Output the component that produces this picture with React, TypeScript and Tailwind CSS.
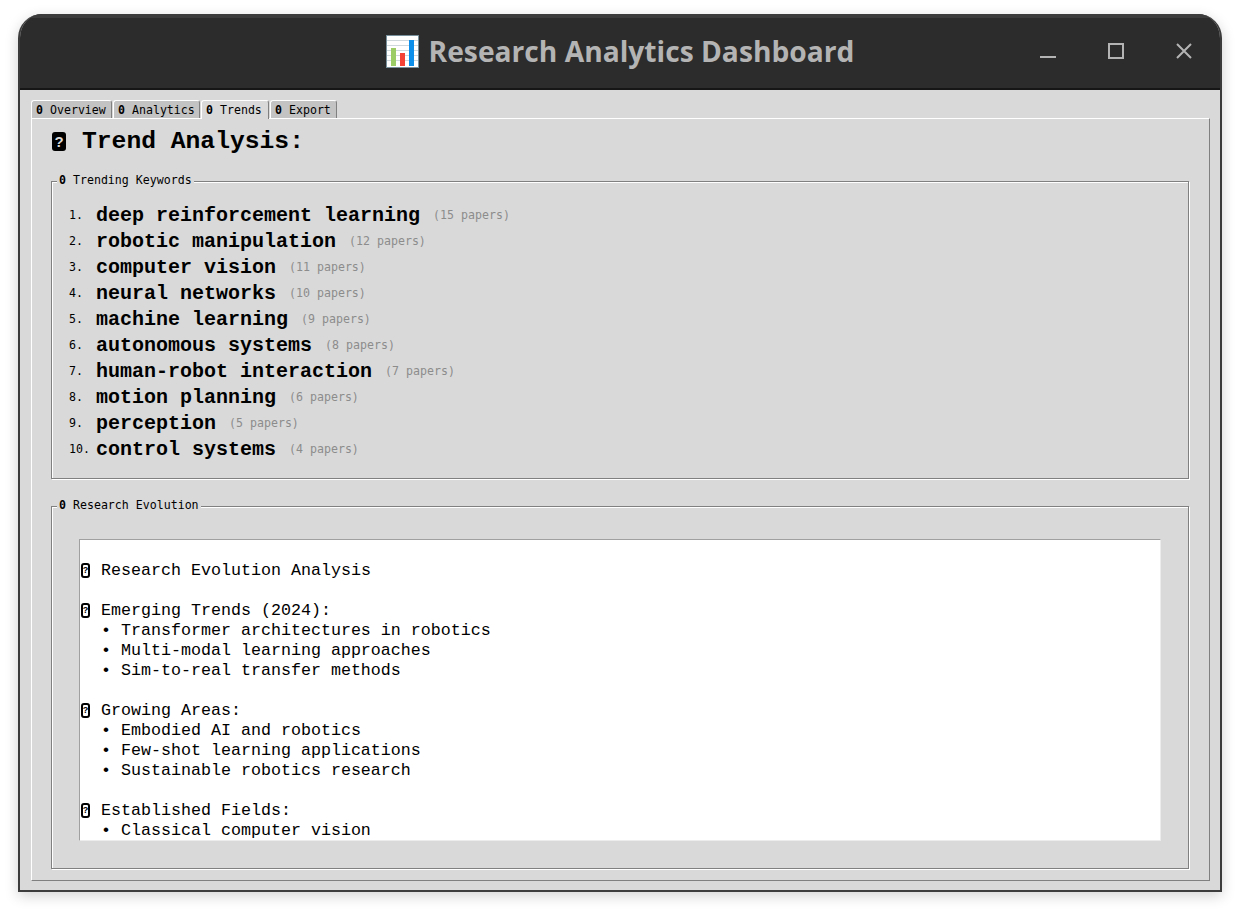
import React from 'react';

const keywords = [
  ['deep reinforcement learning', 15],
  ['robotic manipulation', 12],
  ['computer vision', 11],
  ['neural networks', 10],
  ['machine learning', 9],
  ['autonomous systems', 8],
  ['human-robot interaction', 7],
  ['motion planning', 6],
  ['perception', 5],
  ['control systems', 4],
] as const;

const tabs = [
  { name: 'Overview', width: 'w-[81px]', active: false },
  { name: 'Analytics', width: 'w-[87px]', active: false },
  { name: 'Trends', width: 'w-[68px]', active: true },
  { name: 'Export', width: 'w-[67px]', active: false },
];

const evolution: (string | { head: string })[] = [
  '',
  { head: 'Research Evolution Analysis' },
  '',
  { head: 'Emerging Trends (2024):' },
  '  • Transformer architectures in robotics',
  '  • Multi-modal learning approaches',
  '  • Sim-to-real transfer methods',
  '',
  { head: 'Growing Areas:' },
  '  • Embodied AI and robotics',
  '  • Few-shot learning applications',
  '  • Sustainable robotics research',
  '',
  { head: 'Established Fields:' },
  '  • Classical computer vision',
];

// missing-glyph box that the toolkit draws in place of the emoji
const Tofu: React.FC = () => (
  <span className="inline-flex h-[15px] w-[9px] items-center justify-center rounded-[3px] border-2 border-black bg-white font-['Liberation_Sans',sans-serif] text-[9px] font-bold leading-none text-black">
    ?
  </span>
);

const SmallTofu: React.FC = () => <span className="font-bold">0</span>;

const ChartIcon: React.FC = () => (
  <svg width="33" height="33" viewBox="0 0 33 33" className="shrink-0">
    <rect x="0.5" y="0.5" width="32" height="32" fill="#fff" stroke="#78909c" />
    <path d="M1 5.5h31M1 10.5h31M1 15.5h31M1 20.5h31M1 25.5h31" stroke="#cfd8dc" strokeWidth="1" />
    <rect x="5" y="13" width="5" height="18" fill="#9ccc65" />
    <rect x="14" y="18" width="5" height="13" fill="#f44336" />
    <rect x="23" y="5" width="5" height="26" fill="#0b8fea" />
  </svg>
);

const App: React.FC = () => {
  return (
    <div className="h-[910px] w-[1240px] bg-white pl-[18px] pt-[14px] font-['Liberation_Mono',monospace] text-black">
      <div className="flex h-[878px] w-[1204px] flex-col overflow-hidden rounded-t-[24px] border-2 border-t-0 border-[#3c3c3c] bg-[#d9d9d9] shadow-[0_4px_14px_rgba(0,0,0,0.18)]">
        <header className="grid h-[76px] shrink-0 grid-cols-[1fr_auto_1fr] items-center border-t-[4px] border-b-2 border-t-[#3c3c3c] border-b-[#161616] bg-[#2c2c2c] pb-[4px]">
          <div />
          <div className="flex items-center gap-[10px]">
            <ChartIcon />
            <span className="font-['Open_Sans',sans-serif] text-[28.2px] font-bold leading-none text-[#b4b4b4]">
              Research Analytics Dashboard
            </span>
          </div>
          <div className="flex items-center justify-end pr-[28px]">
            <div className="mr-[52px] mt-[12px] h-[2px] w-[16px] bg-[#b4b4b4]" />
            <div className="mr-[52px] h-[16px] w-[16px] border-2 border-[#b4b4b4]" />
            <svg width="16" height="16" viewBox="0 0 16 16" className="text-[#b4b4b4]">
              <path d="M1 1l14 14M15 1L1 15" stroke="currentColor" strokeWidth="2" />
            </svg>
          </div>
        </header>

        <main className="flex min-h-0 flex-1 flex-col pb-[9px] pl-[11px] pr-[10px] pt-[10px]">
          <nav className="flex h-[18px] shrink-0 gap-[1px]">
            {tabs.map((t) => (
              <div
                key={t.name}
                className={`${t.width} flex items-center rounded-t-[3px] border-l border-t border-r border-l-white border-t-white border-r-[#808080] pl-[4px] pt-[2px] font-['DejaVu_Sans_Mono',monospace] text-[11.6px] leading-none ${
                  t.active ? 'relative z-10 -mb-px bg-[#d9d9d9]' : 'bg-[#c3c3c3]'
                }`}
              >
                <span className="whitespace-pre">
                  <SmallTofu /> {t.name}
                </span>
              </div>
            ))}
          </nav>

          <section className="min-h-0 flex-1 border border-b-[#808080] border-l-white border-r-[#808080] border-t-white pl-[19px] pr-[20px]">
            <h1 className="mt-[9px] flex h-[26px] items-center whitespace-pre text-[24.67px] font-bold leading-none">
              <span className="mr-[16px] ml-[1px] inline-flex h-[19px] w-[14px] items-center justify-center rounded-[3px] bg-black font-['Liberation_Sans',sans-serif] text-[15px] text-[#d9d9d9]">
                ?
              </span>
              Trend Analysis:
            </h1>

            <div className="relative mt-[27px] h-[298px] border border-[#808080] pl-[17px] pt-[20px] shadow-[inset_1px_1px_0_#fff,1px_1px_0_#fff]">
              <span className="absolute left-[5px] top-[-9px] whitespace-pre bg-[#d9d9d9] px-[2px] font-['DejaVu_Sans_Mono',monospace] text-[11.6px] leading-[14px]">
                <SmallTofu /> Trending Keywords
              </span>
              {keywords.map(([word, count], i) => (
                <div key={word} className="flex h-[26px] items-center whitespace-pre pt-[1px]">
                  <span className="w-[27px] font-['DejaVu_Sans_Mono',monospace] text-[11.6px]">{i + 1}.</span>
                  <span className="text-[20px] font-bold leading-none">{word}</span>
                  <span className="ml-[13px] font-['DejaVu_Sans_Mono',monospace] text-[11.6px] text-[#8c8c8c]">({count} papers)</span>
                </div>
              ))}
            </div>

            <div className="relative mt-[27px] h-[363px] border border-[#808080] pl-[27px] pt-[32px] shadow-[inset_1px_1px_0_#fff,1px_1px_0_#fff]">
              <span className="absolute left-[5px] top-[-9px] whitespace-pre bg-[#d9d9d9] px-[2px] font-['DejaVu_Sans_Mono',monospace] text-[11.6px] leading-[14px]">
                <SmallTofu /> Research Evolution
              </span>
              <div className="h-[302px] w-[1082px] overflow-hidden border border-b-[#ececec] border-l-[#a0a0a0] border-r-[#ececec] border-t-[#a0a0a0] bg-white pl-[1px] text-[16.67px] leading-[20px]">
                {evolution.map((line, i) =>
                  typeof line === 'string' ? (
                    <div key={i} className="h-[20px] whitespace-pre pt-[1px]">
                      {line}
                    </div>
                  ) : (
                    <div key={i} className="flex h-[20px] items-center whitespace-pre pt-[1px]">
                      <Tofu />
                      <span className="ml-[11px]">{line.head}</span>
                    </div>
                  ),
                )}
              </div>
            </div>
          </section>
        </main>
      </div>
    </div>
  );
};

export default App;
